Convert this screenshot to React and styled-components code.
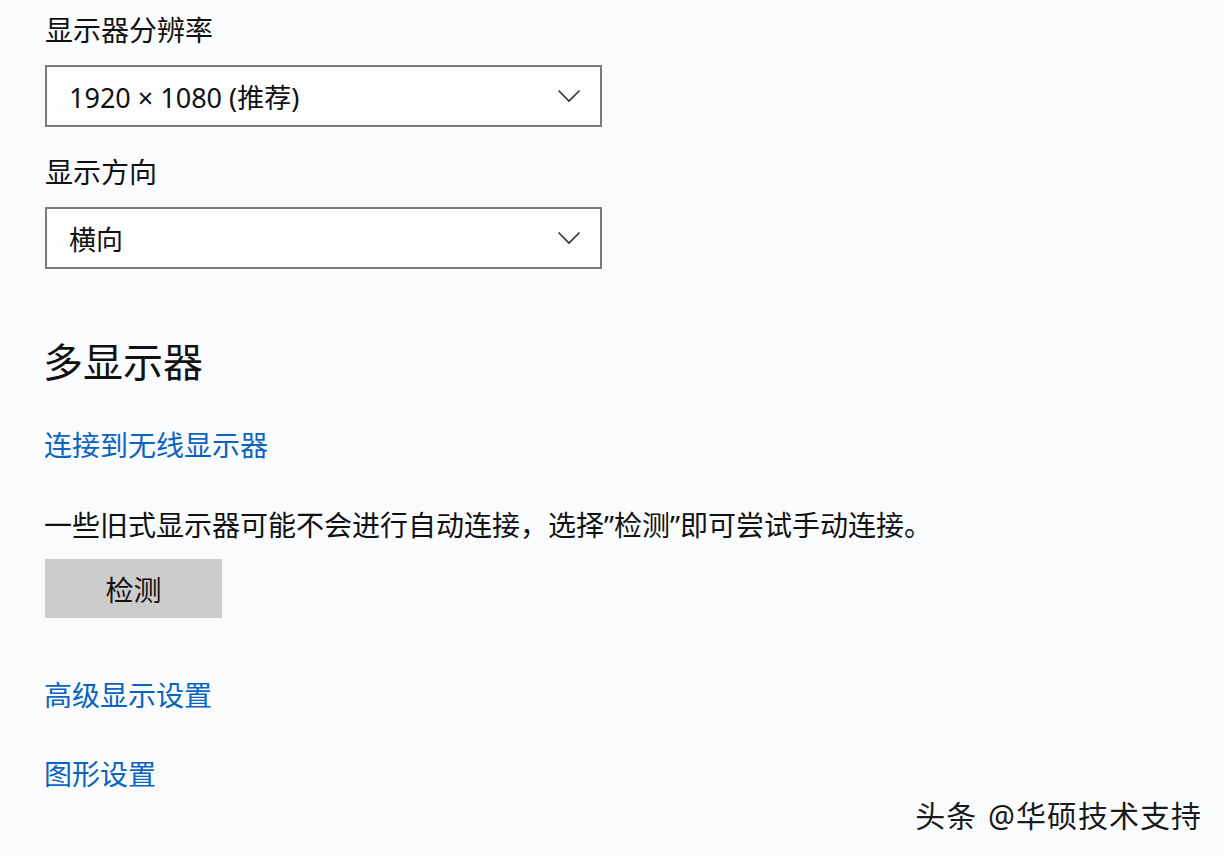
import React from "react";
import styled, { createGlobalStyle } from "styled-components";

const GlobalStyle = createGlobalStyle`
  html, body {
    margin: 0;
    padding: 0;
    background: #fafbfd;
  }
  body {
    font-family: "Noto Sans", "Noto Sans CJK SC", sans-serif;
    color: #111;
  }
`;

const Page = styled.div`
  position: relative;
  width: 1224px;
  height: 856px;
  box-sizing: border-box;
  padding-left: 45px;
  display: flex;
  flex-direction: column;
  align-items: flex-start;
  overflow: hidden;
`;

const Label = styled.div`
  font-size: 28px;
  line-height: 40px;
  margin-top: ${(p) => p.$top}px;
  color: #111;
`;

const Select = styled.div`
  width: 557px;
  height: 62px;
  box-sizing: border-box;
  border: 2px solid #7a7a7e;
  background: #fdfdfe;
  margin-top: 15px;
  display: flex;
  align-items: center;
  justify-content: space-between;
  padding: 0 19px 0 22px;
  font-size: 27px;
  color: #111;
`;

const Heading = styled.h2`
  font-size: 40px;
  font-weight: 400;
  line-height: 56px;
  margin: 65px 0 0 -2px;
  color: #111;
`;

const Link = styled.a`
  font-size: 28px;
  line-height: 40px;
  color: #0b63c2;
  text-decoration: none;
  margin-top: ${(p) => p.$top}px;
  margin-left: -1px;
  cursor: pointer;
`;

const Text = styled.p`
  font-size: 28px;
  line-height: 40px;
  margin: 40px 0 0 -1px;
  color: #111;
`;

const Button = styled.button`
  width: 177px;
  height: 59px;
  margin-top: 14px;
  border: none;
  background: #cccccc;
  font-family: inherit;
  font-size: 28px;
  color: #111;
  padding: 0;
`;

const Watermark = styled.div`
  position: absolute;
  right: 22px;
  top: 796px;
  font-size: 30px;
  line-height: 40px;
  color: #1a1a1a;
  text-shadow: 1px 1px 0 #fff, -1px -1px 0 #fff;
  letter-spacing: 1px;
  word-spacing: 2px;
`;

function Chevron() {
  return (
    <svg width="24" height="14" viewBox="0 0 24 14">
      <polyline points="1.5,1.5 12,12 22.5,1.5" fill="none" stroke="#333" strokeWidth="1.6" />
    </svg>
  );
}

export default function App() {
  return (
    <>
      <GlobalStyle />
      <Page>
        <Label $top={10}>显示器分辨率</Label>
        <Select>
          <span>1920 × 1080 (推荐)</span>
          <Chevron />
        </Select>
        <Label $top={25}>显示方向</Label>
        <Select>
          <span>横向</span>
          <Chevron />
        </Select>
        <Heading>多显示器</Heading>
        <Link $top={35}>连接到无线显示器</Link>
        <Text>一些旧式显示器可能不会进行自动连接，选择”检测”即可尝试手动连接。</Text>
        <Button>检测</Button>
        <Link $top={57}>高级显示设置</Link>
        <Link $top={39}>图形设置</Link>
        <Watermark>头条 @华硕技术支持</Watermark>
      </Page>
    </>
  );
}
